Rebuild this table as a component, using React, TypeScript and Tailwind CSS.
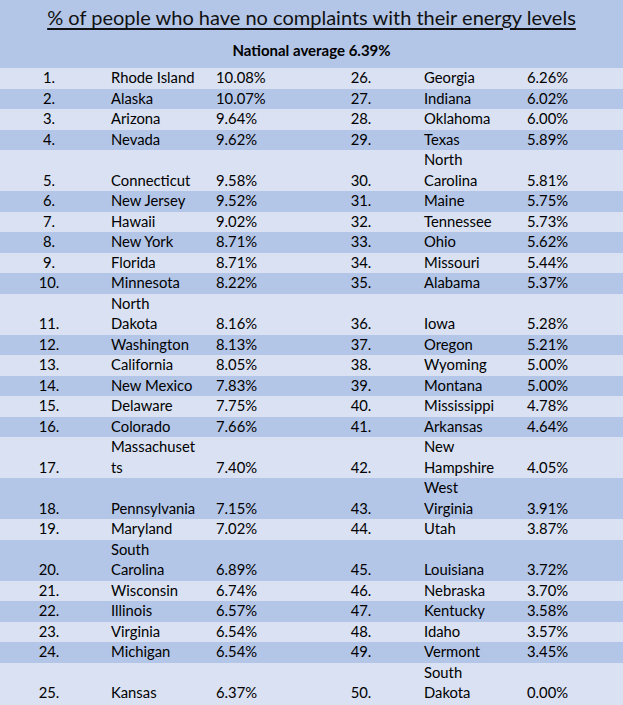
const LEFT: [string, string, string][] = [
  ['1.', 'Rhode Island', '10.08%'],
  ['2.', 'Alaska', '10.07%'],
  ['3.', 'Arizona', '9.64%'],
  ['4.', 'Nevada', '9.62%'],
  ['5.', 'Connecticut', '9.58%'],
  ['6.', 'New Jersey', '9.52%'],
  ['7.', 'Hawaii', '9.02%'],
  ['8.', 'New York', '8.71%'],
  ['9.', 'Florida', '8.71%'],
  ['10.', 'Minnesota', '8.22%'],
  ['11.', 'North\nDakota', '8.16%'],
  ['12.', 'Washington', '8.13%'],
  ['13.', 'California', '8.05%'],
  ['14.', 'New Mexico', '7.83%'],
  ['15.', 'Delaware', '7.75%'],
  ['16.', 'Colorado', '7.66%'],
  ['17.', 'Massachuset\nts', '7.40%'],
  ['18.', 'Pennsylvania', '7.15%'],
  ['19.', 'Maryland', '7.02%'],
  ['20.', 'South\nCarolina', '6.89%'],
  ['21.', 'Wisconsin', '6.74%'],
  ['22.', 'Illinois', '6.57%'],
  ['23.', 'Virginia', '6.54%'],
  ['24.', 'Michigan', '6.54%'],
  ['25.', 'Kansas', '6.37%'],
]

const RIGHT: [string, string, string][] = [
  ['26.', 'Georgia', '6.26%'],
  ['27.', 'Indiana', '6.02%'],
  ['28.', 'Oklahoma', '6.00%'],
  ['29.', 'Texas', '5.89%'],
  ['30.', 'North\nCarolina', '5.81%'],
  ['31.', 'Maine', '5.75%'],
  ['32.', 'Tennessee', '5.73%'],
  ['33.', 'Ohio', '5.62%'],
  ['34.', 'Missouri', '5.44%'],
  ['35.', 'Alabama', '5.37%'],
  ['36.', 'Iowa', '5.28%'],
  ['37.', 'Oregon', '5.21%'],
  ['38.', 'Wyoming', '5.00%'],
  ['39.', 'Montana', '5.00%'],
  ['40.', 'Mississippi', '4.78%'],
  ['41.', 'Arkansas', '4.64%'],
  ['42.', 'New\nHampshire', '4.05%'],
  ['43.', 'West\nVirginia', '3.91%'],
  ['44.', 'Utah', '3.87%'],
  ['45.', 'Louisiana', '3.72%'],
  ['46.', 'Nebraska', '3.70%'],
  ['47.', 'Kentucky', '3.58%'],
  ['48.', 'Idaho', '3.57%'],
  ['49.', 'Vermont', '3.45%'],
  ['50.', 'South\nDakota', '0.00%'],
]

export default function App() {
  return (
    <div className="w-[623px] h-[705px] overflow-hidden bg-[#d9e1f2] text-black font-['Lato','Liberation_Sans',sans-serif]">
      {/* Header */}
      <div className="bg-[#b4c6e7] h-[68px] flex flex-col items-center">
        <h1 className="mt-[4px] text-[20px] leading-[26px] underline underline-offset-[3px] decoration-[1.5px] text-[#111]">
          % of people who have no complaints with their energy levels
        </h1>
        <p className="mt-[11px] text-[15px] font-bold leading-[18px]">National average 6.39%</p>
      </div>

      {/* Rows */}
      {LEFT.map((l, i) => {
        const r = RIGHT[i]
        const tall = l[1].includes('\n') || r[1].includes('\n')
        return (
          <div
            key={l[0]}
            className={`flex items-end text-[14.8px] leading-[20.5px] ${tall ? 'h-[41px]' : 'h-[20.5px]'} ${i % 2 === 1 ? 'bg-[#b4c6e7]' : 'bg-[#d9e1f2]'}`}
          >
            <div className="flex items-end -translate-y-[1px]">
              <div className="w-[98px] text-center">{l[0]}</div>
              <div className="w-[117px] pl-[13px] whitespace-pre-line">{l[1]}</div>
              <div className="w-[110px] pl-[1px]">{l[2]}</div>
              <div className="w-[72px] text-center">{r[0]}</div>
              <div className="w-[130px] pl-[27px] whitespace-pre-line">{r[1]}</div>
              <div>{r[2]}</div>
            </div>
          </div>
        )
      })}
    </div>
  )
}
